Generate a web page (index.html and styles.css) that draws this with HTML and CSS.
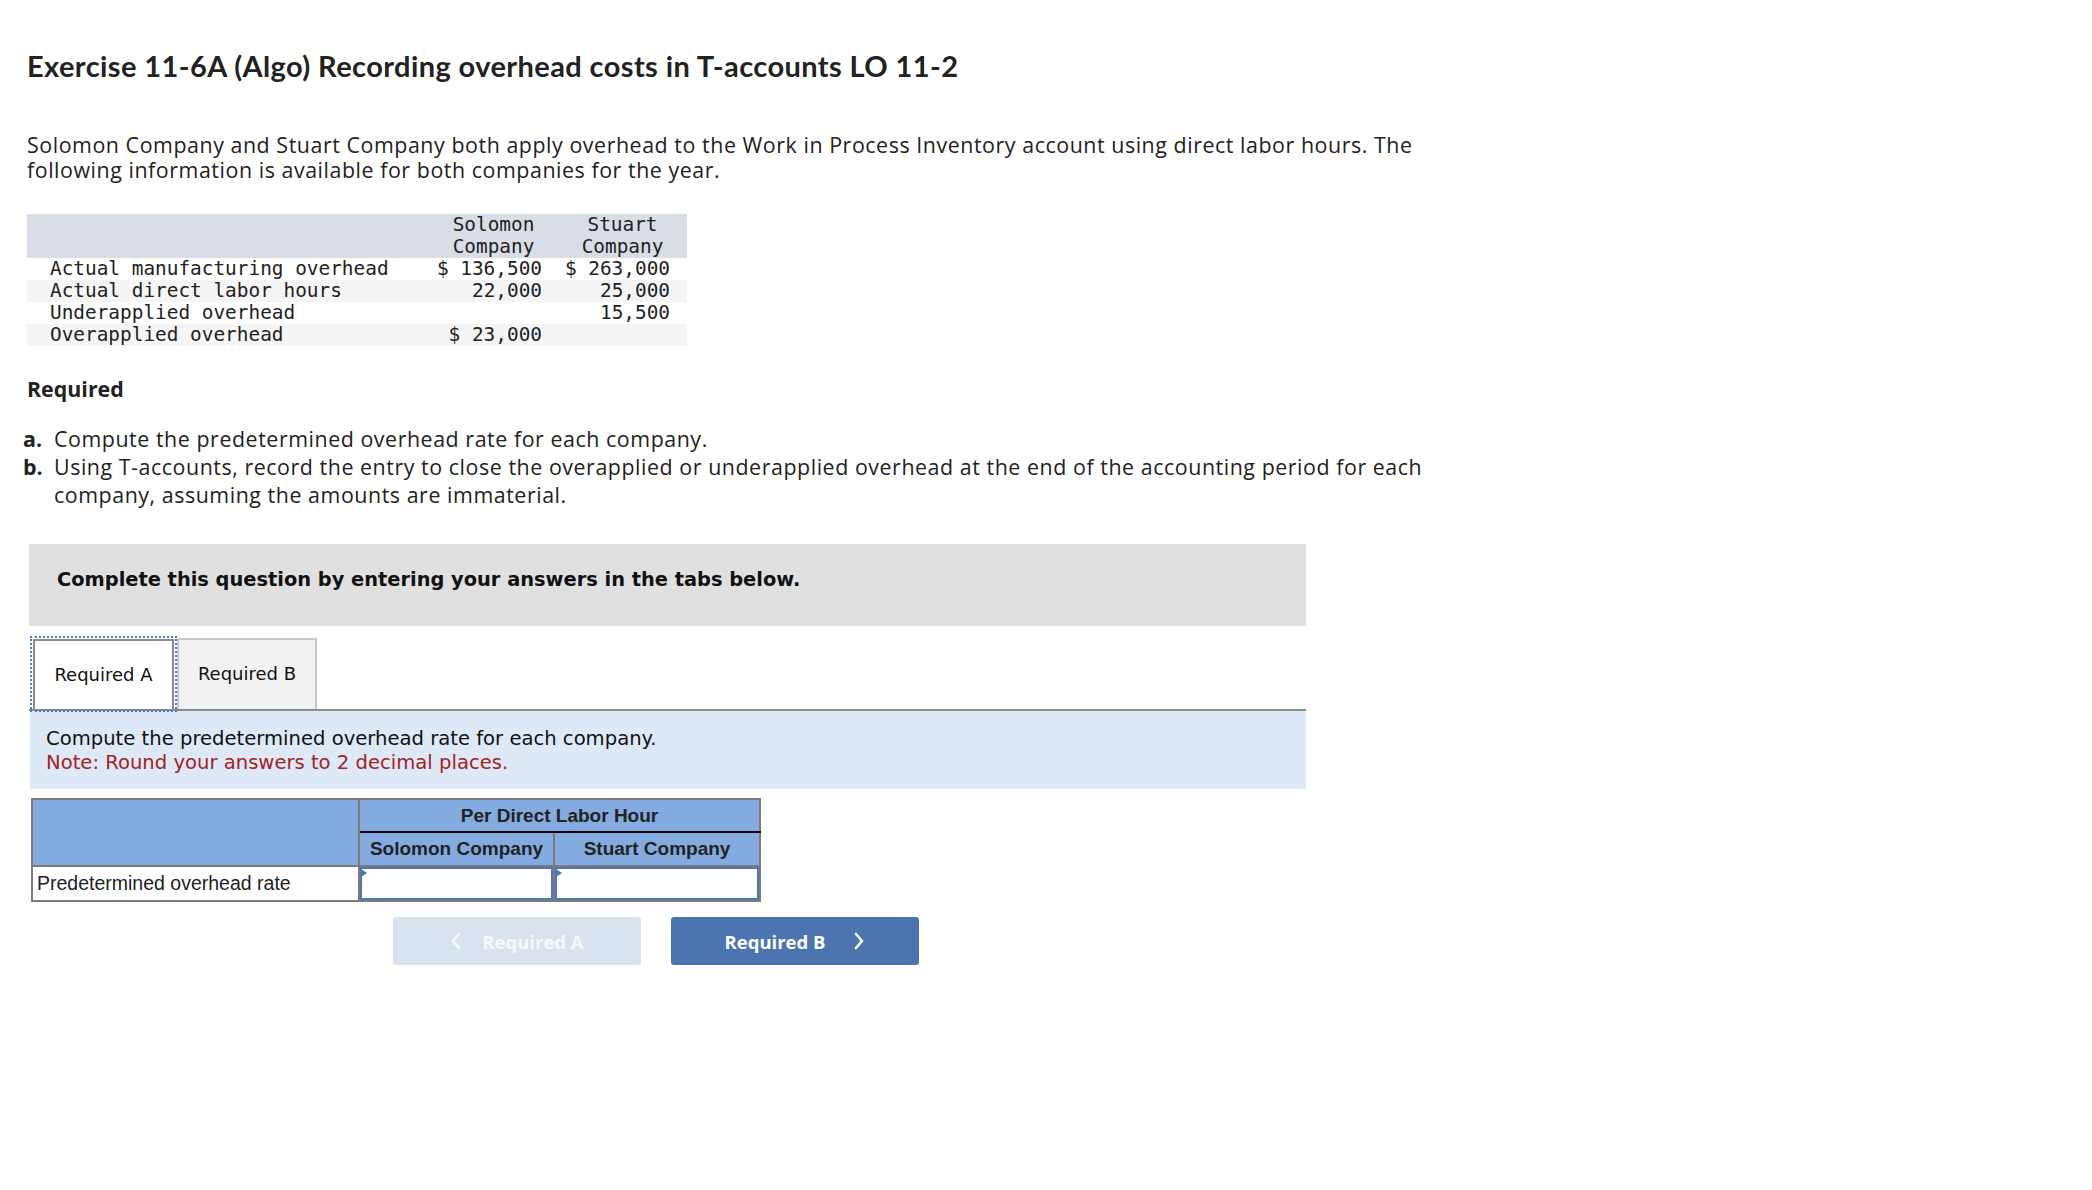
FILE: index.html
```html
<!DOCTYPE html>
<html lang="en">
<head>
<meta charset="utf-8">
<title>Exercise 11-6A (Algo)</title>
<link rel="stylesheet" href="styles.css">
</head>
<body>
<div class="page">
  <h1 class="title">Exercise 11-6A (Algo) Recording overhead costs in T-accounts LO 11-2</h1>
  <p class="intro">Solomon Company and Stuart Company both apply overhead to the Work in Process Inventory account using direct labor hours. The following information is available for both companies for the year.</p>

  <table class="data">
    <thead>
      <tr>
        <th class="c1"></th>
        <th class="c2">Solomon<br>Company</th>
        <th class="c3">Stuart<br>Company</th>
      </tr>
    </thead>
    <tbody>
      <tr><td class="c1">Actual manufacturing overhead</td><td class="c2">$ 136,500</td><td class="c3">$ 263,000</td></tr>
      <tr class="alt"><td class="c1">Actual direct labor hours</td><td class="c2">22,000</td><td class="c3">25,000</td></tr>
      <tr><td class="c1">Underapplied overhead</td><td class="c2"></td><td class="c3">15,500</td></tr>
      <tr class="alt"><td class="c1">Overapplied overhead</td><td class="c2">$ 23,000</td><td class="c3"></td></tr>
    </tbody>
  </table>

  <h2 class="req-heading">Required</h2>
  <ol class="req-list">
    <li><span class="lbl">a.</span><span class="txt">Compute the predetermined overhead rate for each company.</span></li>
    <li><span class="lbl">b.</span><span class="txt">Using T-accounts, record the entry to close the overapplied or underapplied overhead at the end of the accounting period for each company, assuming the amounts are immaterial.</span></li>
  </ol>

  <div class="question">
    <div class="banner">Complete this question by entering your answers in the tabs below.</div>

    <div class="tabs">
      <div class="tab active">Required A</div>
      <div class="tab">Required B</div>
    </div>

    <div class="instr">
      <div>Compute the predetermined overhead rate for each company.</div>
      <div class="note">Note: Round your answers to 2 decimal places.</div>
    </div>

    <table class="answer">
      <tr class="r1">
        <th class="a1" rowspan="2"></th>
        <th class="group" colspan="2">Per Direct Labor Hour</th>
      </tr>
      <tr class="r2">
        <th class="a2">Solomon Company</th>
        <th class="a3">Stuart Company</th>
      </tr>
      <tr class="r3">
        <td class="label">Predetermined overhead rate</td>
        <td class="cell"><div class="input"><span class="flag"></span></div></td>
        <td class="cell"><div class="input"><span class="flag"></span></div></td>
      </tr>
    </table>

    <div class="nav">
      <button class="btn prev" type="button">
        <svg class="chev" width="12" height="18" viewBox="0 0 12 18"><polyline points="9,2 3,9 9,16" fill="none" stroke="currentColor" stroke-width="2.6" stroke-linecap="round" stroke-linejoin="round"/></svg>
        <span>Required A</span>
      </button>
      <button class="btn next" type="button">
        <span>Required B</span>
        <svg class="chev" width="12" height="18" viewBox="0 0 12 18"><polyline points="3,2 9,9 3,16" fill="none" stroke="currentColor" stroke-width="2.6" stroke-linecap="round" stroke-linejoin="round"/></svg>
      </button>
    </div>
  </div>
</div>
</body>
</html>
```

FILE: styles.css
```css
html, body {
  margin: 0;
  padding: 0;
  background: #ffffff;
}

body {
  font-family: "Open Sans", "Liberation Sans", sans-serif;
  color: #222222;
}

.page {
  padding-top: 49px;
}

.title {
  margin: 0 0 0 27px;
  font-family: "Lato", "Open Sans", sans-serif;
  font-weight: 700;
  font-size: 29px;
  letter-spacing: 0.4px;
  line-height: 34px;
  color: #222222;
}

.intro {
  margin: 49px 0 0 27px;
  width: 1425px;
  font-size: 21.4px;
  letter-spacing: 0.55px;
  line-height: 25px;
  color: #222222;
}

/* data table */
.data {
  margin: 32px 0 0 27px;
  border-collapse: collapse;
  border-spacing: 0;
  width: 660px;
  font-family: "DejaVu Sans Mono", "Liberation Mono", monospace;
  font-size: 19.4px;
  line-height: 22px;
  color: #222222;
}

.data th,
.data td {
  padding: 0;
  font-weight: normal;
  white-space: nowrap;
}

.data thead tr {
  background: #d9dde5;
}

.data th {
  text-align: center;
  vertical-align: bottom;
}

.data .c1 {
  width: 375px;
  padding-left: 23px;
  text-align: left;
}

.data .c2 {
  width: 117px;
  padding-right: 13px;
  text-align: right;
}

.data .c3 {
  width: 115px;
  padding-right: 17px;
  text-align: right;
}

.data th.c2 {
  text-align: center;
  padding-left: 7px;
  padding-right: 0;
  width: 123px;
}

.data th.c3 {
  text-align: center;
  padding-left: 3px;
  padding-right: 0;
  width: 129px;
}

.data tr.alt {
  background: #f5f5f5;
}

/* required */
.req-heading {
  margin: 30px 0 0 27px;
  font-family: "Open Sans", sans-serif;
  font-weight: 700;
  font-size: 21.4px;
  line-height: 25px;
  color: #222222;
}

.req-list {
  list-style: none;
  margin: 24px 0 0 23px;
  padding: 0;
  width: 1450px;
  font-size: 21.4px;
  letter-spacing: 0.55px;
  line-height: 28px;
}

.req-list li {
  display: flex;
}

.req-list .lbl {
  flex: 0 0 31px;
  font-weight: 700;
  letter-spacing: 0;
}

.req-list .txt {
  flex: 1 1 auto;
}

/* question area */
.question {
  margin: 35px 0 0 29px;
  width: 1277px;
  padding-bottom: 40px;
}

.banner {
  background: #e0e0e0;
  height: 82px;
  box-sizing: border-box;
  padding: 24px 28px 0 28px;
  font-family: "DejaVu Sans", Verdana, sans-serif;
  font-weight: 700;
  font-size: 19.4px;
  line-height: 23px;
  color: #111111;
}

.tabs {
  display: flex;
  align-items: flex-end;
  margin-top: 12px;
  border-bottom: 2px solid #8a8a8a;
  padding-left: 1px;
}

.tab {
  box-sizing: border-box;
  height: 71px;
  width: 140px;
  text-align: center;
  font-family: "DejaVu Sans", Verdana, sans-serif;
  font-size: 18px;
  line-height: 66px;
  padding-top: 1px;
  color: #111111;
  background: #f2f2f2;
  border: 2px solid #c8c8c8;
  border-bottom: none;
}

.tab.active {
  height: 70px;
  width: 141px;
  margin: 0 3px 0 3px;
  background: #ffffff;
  border-color: #8a8a8a;
  outline: 2px dotted #4a78c2;
  outline-offset: 1px;
  position: relative;
  z-index: 1;
}

.instr {
  background: #dde9f7;
  padding: 16px 16px 15px 16px;
  margin-left: 1px;
  font-family: "DejaVu Sans", Verdana, sans-serif;
  font-size: 19.6px;
  line-height: 23.5px;
  color: #111111;
}

.instr .note {
  color: #a5211d;
}

/* answer table */
.answer {
  margin: 9px 0 0 2px;
  border-collapse: collapse;
  border: 2px solid #7b7b7b;
  font-family: "Liberation Sans", Arial, sans-serif;
  font-size: 19px;
  color: #222222;
}

.answer th,
.answer td {
  border: 2px solid #7b7b7b;
  padding: 0;
}

.answer th {
  background: #84abdf;
  font-weight: 700;
  text-align: center;
}

.answer .a1 {
  width: 325px;
}

.answer .a2 {
  width: 193px;
}

.answer .a3 {
  width: 204px;
}

.answer .r1 th.group {
  height: 31px;
  border-bottom: 2px solid #000000;
}

.answer .r2 th {
  height: 32px;
}

.answer .r3 td {
  height: 33px;
  background: #ffffff;
}

.answer td.label {
  padding-left: 4px;
  text-align: left;
  font-size: 19.5px;
}

.answer td.cell {
  padding: 0;
}

.input {
  position: relative;
  box-sizing: border-box;
  height: 33px;
  border: 2px solid #4f77b6;
  background: #ffffff;
}

.flag {
  position: absolute;
  left: -1px;
  top: 0;
  width: 0;
  height: 0;
  border-left: 6px solid #4a74b5;
  border-top: 4px solid transparent;
  border-bottom: 4px solid transparent;
}

/* nav buttons */
.nav {
  display: flex;
  gap: 30px;
  margin: 15px 0 0 364px;
}

.btn {
  display: flex;
  align-items: center;
  justify-content: center;
  gap: 20px;
  width: 248px;
  height: 48px;
  border: none;
  border-radius: 3px;
  font-family: "Open Sans", sans-serif;
  font-weight: 700;
  font-size: 18.5px;
  color: #ffffff;
  cursor: pointer;
  padding: 0;
}

.btn.prev {
  background: #d9e3ef;
  color: #f7f9fc;
}

.btn.next {
  background: #4b74b1;
  gap: 28px;
}

.chev {
  display: block;
}
```
